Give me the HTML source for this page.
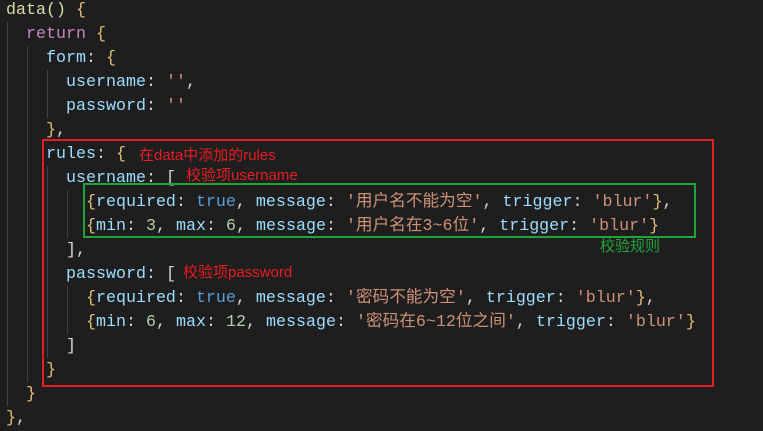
<!DOCTYPE html>
<html><head><meta charset="utf-8"><style>
body{margin:0;width:763px;height:427px;background:#1e1e1e;overflow:hidden;position:relative;}
.l{position:absolute;left:6px;height:24px;line-height:24px;white-space:pre;font-family:"Liberation Mono","Noto Sans CJK SC",monospace;font-size:16.67px;color:#d4d4d4;}
.k{color:#9cdcfe}.f{color:#dcdcaa}.r{color:#c586c0}.b{color:#569cd6}.s{color:#ce9178}.n{color:#b5cea8}.y{color:#e2c074}
.g{position:absolute;width:1px;background:#404040;}
.box{position:absolute;box-sizing:border-box;}
.a{position:absolute;font-family:"Liberation Sans","Noto Sans CJK SC",sans-serif;font-size:15px;white-space:pre;line-height:16px;}
</style></head><body>
<div class="g" style="left:7px;top:22px;height:384px"></div>
<div class="g" style="left:27px;top:46px;height:336px"></div>
<div class="g" style="left:47px;top:70px;height:48px"></div>
<div class="g" style="left:47px;top:166px;height:192px"></div>
<div class="g" style="left:67px;top:190px;height:48px"></div>
<div class="g" style="left:67px;top:286px;height:48px"></div>

<div class="l" style="top:-1px"><span class="f">data</span><span class="f">()</span> <span class="y">{</span></div>
<div class="l" style="top:23px">  <span class="r">return</span> <span class="y">{</span></div>
<div class="l" style="top:47px">    <span class="k">form</span>: <span class="y">{</span></div>
<div class="l" style="top:71px">      <span class="k">username</span>: <span class="s">''</span>,</div>
<div class="l" style="top:95px">      <span class="k">password</span>: <span class="s">''</span></div>
<div class="l" style="top:119px">    <span class="y">}</span>,</div>
<div class="l" style="top:143px">    <span class="k">rules</span>: <span class="y">{</span></div>
<div class="l" style="top:167px">      <span class="k">username</span>: [</div>
<div class="l" style="top:191px">        <span class="y">{</span><span class="k">required</span>: <span class="b">true</span>, <span class="k">message</span>: <span class="s">'用户名不能为空'</span>, <span class="k">trigger</span>: <span class="s">'blur'</span><span class="y">}</span>,</div>
<div class="l" style="top:215px">        <span class="y">{</span><span class="k">min</span>: <span class="n">3</span>, <span class="k">max</span>: <span class="n">6</span>, <span class="k">message</span>: <span class="s">'用户名在3~6位'</span>, <span class="k">trigger</span>: <span class="s">'blur'</span><span class="y">}</span></div>
<div class="l" style="top:239px">      ],</div>
<div class="l" style="top:263px">      <span class="k">password</span>: [</div>
<div class="l" style="top:287px">        <span class="y">{</span><span class="k">required</span>: <span class="b">true</span>, <span class="k">message</span>: <span class="s">'密码不能为空'</span>, <span class="k">trigger</span>: <span class="s">'blur'</span><span class="y">}</span>,</div>
<div class="l" style="top:311px">        <span class="y">{</span><span class="k">min</span>: <span class="n">6</span>, <span class="k">max</span>: <span class="n">12</span>, <span class="k">message</span>: <span class="s">'密码在6~12位之间'</span>, <span class="k">trigger</span>: <span class="s">'blur'</span><span class="y">}</span></div>
<div class="l" style="top:335px">      ]</div>
<div class="l" style="top:359px">    <span class="y">}</span></div>
<div class="l" style="top:383px">  <span class="y">}</span></div>
<div class="l" style="top:407px"><span class="y">}</span>,</div>

<div class="box" style="left:42px;top:139px;width:672px;height:248px;border:2px solid #e81c24"></div>
<div class="box" style="left:83px;top:183px;width:613px;height:55px;border:2px solid #22a33a"></div>
<div class="a" style="left:139px;top:148px;color:#e81c24">在data中添加的rules</div>
<div class="a" style="left:186px;top:168px;color:#e81c24">校验项username</div>
<div class="a" style="left:600px;top:239px;color:#22a33a">校验规则</div>
<div class="a" style="left:183px;top:265px;color:#e81c24">校验项password</div>
</body></html>
